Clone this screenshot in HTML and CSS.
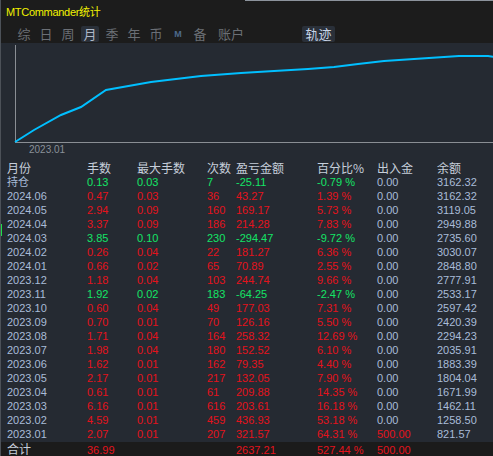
FILE: index.html
```html
<!DOCTYPE html>
<html lang="zh">
<head>
    <meta charset="UTF-8">
    <title>MTCommander统计</title>
    <link rel="stylesheet" href="styles.css">
</head>
<body>
    <div class="window">
        <div class="header">
            <div class="title">MTCommander统计</div>
            <div class="tabs">
                <div class="tab">综</div>
                <div class="tab">日</div>
                <div class="tab">周</div>
                <div class="tab active">月</div>
                <div class="tab">季</div>
                <div class="tab">年</div>
                <div class="tab">币</div>
                <div class="tab tab-m">M</div>
                <div class="tab">备</div>
                <div class="tab wide">账户</div>
                <div class="tab track">轨迹</div>
            </div>
        </div>

        <div class="chart">
            <svg width="493" height="115" viewBox="0 43 493 115">
                <line x1="14.5" y1="45" x2="14.5" y2="142" stroke="#8a8e94" stroke-width="1"/>
                <line x1="14" y1="142.5" x2="493" y2="142.5" stroke="#8a8e94" stroke-width="1"/>
                <polyline fill="none" stroke="#00bfff" stroke-width="2"
                    points="14,142 33,130 60,115 80,107 105,90 150,82 200,76 240,73 273,71 307,69 333,67 357,64 383,61 413,59 443,57 458,56 487,56 493,57"/>
                <text x="28" y="153" class="axis-label">2023.01</text>
            </svg>
        </div>

        <div class="report" id="report">
            <div class="row head">
                <span>月份</span><span>手数</span><span>最大手数</span><span>次数</span>
                <span>盈亏金额</span><span>百分比%</span><span>出入金</span><span>余额</span>
            </div>
            <!-- rows are added by the script below -->
        </div>

        <div class="row total">
            <span class="label">合计</span><span class="red">36.99</span><span></span><span></span>
            <span class="red">2637.21</span><span class="red">527.44 %</span><span class="red">500.00</span><span></span>
        </div>

        <div class="marker"></div>
    </div>

    <script>
        const months = [
            ["持仓", "0.13", "0.03", "7", "-25.11", "-0.79 %", "0.00", "3162.32"],
            ["2024.06", "0.47", "0.03", "36", "43.27", "1.39 %", "0.00", "3162.32"],
            ["2024.05", "2.94", "0.09", "160", "169.17", "5.73 %", "0.00", "3119.05"],
            ["2024.04", "3.37", "0.09", "186", "214.28", "7.83 %", "0.00", "2949.88"],
            ["2024.03", "3.85", "0.10", "230", "-294.47", "-9.72 %", "0.00", "2735.60"],
            ["2024.02", "0.26", "0.04", "22", "181.27", "6.36 %", "0.00", "3030.07"],
            ["2024.01", "0.66", "0.02", "65", "70.89", "2.55 %", "0.00", "2848.80"],
            ["2023.12", "1.18", "0.04", "103", "244.74", "9.66 %", "0.00", "2777.91"],
            ["2023.11", "1.92", "0.02", "183", "-64.25", "-2.47 %", "0.00", "2533.17"],
            ["2023.10", "0.60", "0.04", "49", "177.03", "7.31 %", "0.00", "2597.42"],
            ["2023.09", "0.70", "0.01", "70", "126.16", "5.50 %", "0.00", "2420.39"],
            ["2023.08", "1.71", "0.04", "164", "258.32", "12.69 %", "0.00", "2294.23"],
            ["2023.07", "1.98", "0.04", "180", "152.52", "6.10 %", "0.00", "2035.91"],
            ["2023.06", "1.62", "0.01", "162", "79.35", "4.40 %", "0.00", "1883.39"],
            ["2023.05", "2.17", "0.01", "217", "132.05", "7.90 %", "0.00", "1804.04"],
            ["2023.04", "0.61", "0.01", "61", "209.88", "14.35 %", "0.00", "1671.99"],
            ["2023.03", "6.16", "0.01", "616", "203.61", "16.18 %", "0.00", "1462.11"],
            ["2023.02", "4.59", "0.01", "459", "436.93", "53.18 %", "0.00", "1258.50"],
            ["2023.01", "2.07", "0.01", "207", "321.57", "64.31 %", "500.00", "821.57"]
        ];

        const report = document.getElementById("report");
        months.forEach(m => {
            const tone = m[4].startsWith("-") ? "green" : "red";
            const cash = m[6] === "0.00" ? "blue" : "red";
            const row = document.createElement("div");
            row.className = "row";
            row.innerHTML = `
                <span class="label">${m[0]}</span>
                <span class="${tone}">${m[1]}</span>
                <span class="${tone}">${m[2]}</span>
                <span class="${tone}">${m[3]}</span>
                <span class="${tone}">${m[4]}</span>
                <span class="${tone}">${m[5]}</span>
                <span class="${cash}">${m[6]}</span>
                <span class="blue">${m[7]}</span>
            `;
            report.appendChild(row);
        });
    </script>
</body>
</html>
```
FILE: styles.css
```css
html, body {
    margin: 0;
    padding: 0;
    background: #252a32;
}
.window {
    position: relative;
    width: 493px;
    height: 456px;
    overflow: hidden;
    background: #252a32;
    border-left: 1px solid #4c5158;
    box-sizing: border-box;
    font-family: "Liberation Sans", "Noto Sans CJK SC", sans-serif;
}
.header {
    position: relative;
    height: 43px;
    background: #1c1c1c;
}
.header::before {
    content: "";
    position: absolute;
    top: 0;
    left: 244px;
    right: 0;
    height: 1px;
    background: #8c939c;
}
.title {
    padding: 5px 0 0 5px;
    height: 21px;
    box-sizing: border-box;
    color: #f2f200;
    font-size: 11px;
    line-height: 14px;
    letter-spacing: -0.3px;
}
.tabs {
    display: flex;
    gap: 4px;
    padding-left: 14px;
    padding-top: 5px;
}
.tab {
    width: 18px;
    height: 16px;
    line-height: 16px;
    text-align: center;
    color: #6b6f75;
    font-size: 13px;
    font-family: "Noto Sans CJK SC", sans-serif;
    border-radius: 2px;
}
.tab.active {
    background: #2a3039;
    color: #aeb8c8;
}
.tab-m {
    font-family: "Liberation Sans", sans-serif;
    font-size: 9px;
    font-weight: bold;
    color: #4d6a8c;
}
.tab.wide {
    width: 36px;
}
.tab.track {
    width: 33px;
    margin-left: 49px;
    background: #2a3039;
    color: #c8d4e6;
}
.chart {
    height: 115px;
}
.chart svg {
    display: block;
}
.axis-label {
    fill: #8a9099;
    font-size: 10px;
    font-family: "Liberation Sans", sans-serif;
}
.report {
    padding-top: 3px;
}
.row {
    display: grid;
    grid-template-columns: 80px 50px 70px 29px 81px 60px 60px 1fr;
    height: 14px;
    line-height: 14px;
    padding-left: 6px;
    font-size: 11px;
    white-space: nowrap;
}
.row.head {
    font-size: 12px;
    color: #c6ceda;
}
.row.head span {
    font-family: "Noto Sans CJK SC", sans-serif;
}
.label {
    color: #a9bcd8;
}
.red {
    color: #e4121c;
}
.green {
    color: #14e466;
}
.blue {
    color: #a9bcd8;
}
.row.total {
    margin-top: 1px;
    height: 16px;
    line-height: 16px;
    background: #1b1b1b;
}
.row.total .label {
    color: #c6ceda;
    font-size: 12px;
}
.marker {
    position: absolute;
    left: -1px;
    top: 224px;
    width: 2px;
    height: 12px;
    background: #1ee04a;
}
```
